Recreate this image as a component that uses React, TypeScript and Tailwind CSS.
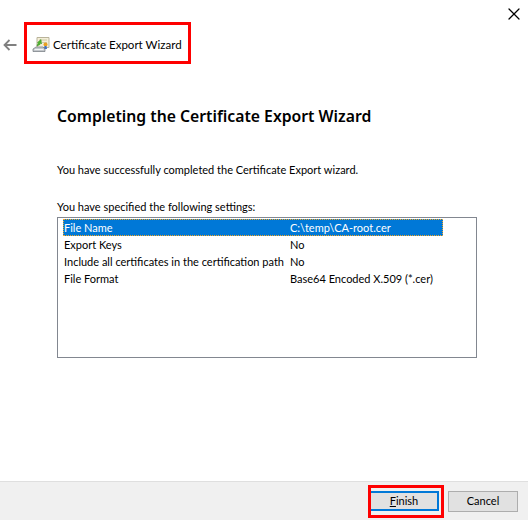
import { X } from 'lucide-react'

const settings = [
  { name: 'File Name', value: 'C:\\temp\\CA-root.cer', selected: true },
  { name: 'Export Keys', value: 'No' },
  { name: 'Include all certificates in the certification path', value: 'No' },
  { name: 'File Format', value: 'Base64 Encoded X.509 (*.cer)' },
]

function WizardIcon() {
  return (
    <svg width="18" height="18" viewBox="0 0 18 18" className="shrink-0">
      <path d="M5 1.500h12v10H5z" fill="#f4efd8" stroke="#b9b39a" />
      <path d="M7 4h8M10 6.500h5" stroke="#cfc8a8" />
      <circle cx="13.500" cy="8.500" r="2" fill="#e8a020" />
      <path d="M12.500 10l-.5 3h3l-.5-3z" fill="#3d6fc4" />
      <path d="M9 3.500 5.500 6.500l1 .5c-1 1-1.500 2-1.500 3l3-1.500c0-.8.300-1 1-1.500l.5 1z" fill="#4fb52f" stroke="#2f8a1c" strokeWidth="0.5" />
      <path d="M1 13l3-2h7l2 2v2.500H1z" fill="#c4c8cc" stroke="#70767c" strokeWidth="0.7" />
      <path d="M2.500 13.500h9" stroke="#f2f4f5" />
    </svg>
  )
}

function BackArrow() {
  return (
    <svg width="14" height="12" viewBox="0 0 14 12" fill="none" stroke="#808080" strokeWidth="1.8" className="mt-[4px]">
      <path d="M13.500 6H1.500M6.500 1 1.500 6l5 5" />
    </svg>
  )
}

export default function App() {
  return (
    <div className="w-[528px] h-[520px] flex flex-col bg-white text-[11px] leading-[16px] text-black font-['Lato',sans-serif] overflow-hidden">
      <div className="h-[22px] flex justify-end">
        <X size={20} strokeWidth={1.5} className="mt-[4px] mr-[4px]" />
      </div>

      <div className="flex items-center pl-[3px]">
        <BackArrow />
        <div className="ml-[7px] w-[167px] h-[42px] border-[3px] border-[#fe0000] flex items-center gap-[3px] pl-[5px] pt-[4px]">
          <WizardIcon />
          <span className="text-[11.55px] whitespace-nowrap">Certificate Export Wizard</span>
        </div>
      </div>

      <div className="flex-1 pl-[57px] pr-[51px]">
        <h1 className="mt-[41px] text-[15.75px] leading-[22px] font-semibold whitespace-nowrap font-['Noto_Sans',sans-serif]">
          Completing the Certificate Export Wizard
        </h1>
        <p className="mt-[35px]">You have successfully completed the Certificate Export wizard.</p>
        <p className="mt-[21px]">You have specified the following settings:</p>
        <div className="mt-[2px] h-[141px] border border-[#828790] pt-[1px] pl-[5px] pr-[33px]">
          {settings.map((s) => (
            <div
              key={s.name}
              className={
                s.selected
                  ? 'flex h-[17px] items-center bg-[#0078d7] text-white outline-1 -outline-offset-1 outline-dotted outline-[#f5a623]'
                  : 'flex h-[17px] items-center'
              }
            >
              <span className="w-[227px] pl-[1px] whitespace-nowrap">{s.name}</span>
              <span className="whitespace-nowrap">{s.value}</span>
            </div>
          ))}
        </div>
      </div>

      <div className="h-[39px] bg-[#f0f0f0] border-t border-[#dfdfdf] flex items-center justify-end gap-[4px] pr-[10px]">
        <div className="w-[76px] h-[33px] border-[3px] border-[#fe0000] flex items-center justify-end">
          <button className="w-[68px] h-[20px] mr-[2px] border-2 border-l-0 border-[#0078d7] bg-[#e1e1e1] flex items-center justify-center">
            <span><span className="underline">F</span>inish</span>
          </button>
        </div>
        <button className="w-[70px] h-[21px] border border-[#adadad] bg-[#e1e1e1] flex items-center justify-center">
          Cancel
        </button>
      </div>
    </div>
  )
}
